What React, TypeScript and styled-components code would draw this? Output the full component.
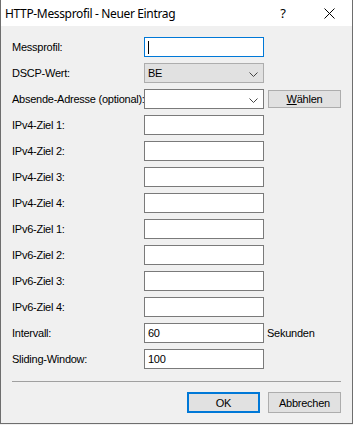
import React from 'react';
import styled, { createGlobalStyle } from 'styled-components';

const GlobalStyle = createGlobalStyle`
  html, body {
    margin: 0;
    padding: 0;
    background: #f0f0f0;
  }
`;

const Window = styled.div`
  box-sizing: border-box;
  width: 353px;
  height: 424px;
  background: #f0f0f0;
  border-left: 1px solid #6e6e6e;
  border-right: 1px solid #6e6e6e;
  border-bottom: 1px solid #6e6e6e;
  display: flex;
  flex-direction: column;
  font-family: 'Liberation Sans', Arial, sans-serif;
  font-size: 11px;
  letter-spacing: -0.25px;
  color: #000;
`;

const TitleBar = styled.div`
  height: 26px;
  background: #fff;
  display: flex;
  align-items: center;
  padding-left: 4px;
`;

const Title = styled.span`
  flex: 1;
  font-family: 'Noto Sans', 'Open Sans', sans-serif;
  font-size: 12px;
  letter-spacing: -0.35px;
  color: #000;
`;

const TitleButton = styled.div`
  width: 46px;
  height: 26px;
  display: flex;
  align-items: center;
  justify-content: center;
  font-family: 'Noto Sans', sans-serif;
  font-size: 13px;
`;

const FormGrid = styled.div`
  display: grid;
  grid-template-columns: 132px 120px auto;
  grid-auto-rows: 20px;
  row-gap: 6px;
  align-items: center;
  padding: 11px 0 0 11px;
`;

const Label = styled.label`
  white-space: nowrap;
`;

const Field = styled.div<{ $focused?: boolean; $filled?: boolean }>`
  box-sizing: border-box;
  position: relative;
  height: 20px;
  border: 1px solid ${p => (p.$focused ? '#0078d7' : p.$filled ? '#adadad' : '#7a7a7a')};
  background: ${p => (p.$filled ? '#e1e1e1' : '#fff')};
  display: flex;
  align-items: center;
  padding-left: 3px;
`;

const Caret = styled.span`
  width: 1px;
  height: 13px;
  background: #000;
`;

const Chevron = styled.svg`
  position: absolute;
  right: 5px;
  top: 8px;
`;

const Button = styled.button<{ $default?: boolean }>`
  box-sizing: border-box;
  width: 73px;
  height: 21px;
  background: #e1e1e1;
  border: ${p => (p.$default ? '2px solid #0078d7' : '1px solid #adadad')};
  font-family: 'Liberation Sans', Arial, sans-serif;
  font-size: 11px;
  letter-spacing: -0.25px;
  color: #000;
  padding: 0;
`;

const SideButton = styled(Button)`
  height: 18px;
  margin-left: 4px;
`;

const Unit = styled.span`
  margin-left: 3px;
`;

const Separator = styled.div`
  margin: 12px 11px 0 11px;
  height: 1px;
  background: #a0a0a0;
`;

const Footer = styled.div`
  display: flex;
  justify-content: flex-end;
  gap: 8px;
  padding: 10px 11px 0 0;
`;

const ChevronIcon = () => (
  <Chevron width="9" height="5" viewBox="0 0 9 5">
    <polyline points="0.5,0.5 4.5,4.5 8.5,0.5" fill="none" stroke="#444" strokeWidth="1" />
  </Chevron>
);

const targets = ['IPv4-Ziel 1:', 'IPv4-Ziel 2:', 'IPv4-Ziel 3:', 'IPv4-Ziel 4:', 'IPv6-Ziel 1:', 'IPv6-Ziel 2:', 'IPv6-Ziel 3:', 'IPv6-Ziel 4:'];

export default function App() {
  return (
    <>
      <GlobalStyle />
      <Window>
        <TitleBar>
          <Title>HTTP-Messprofil - Neuer Eintrag</Title>
          <TitleButton>?</TitleButton>
          <TitleButton>
            <svg width="11" height="11" viewBox="0 0 11 11">
              <path d="M0.5 0.5 L10.5 10.5 M10.5 0.5 L0.5 10.5" stroke="#000" strokeWidth="1" />
            </svg>
          </TitleButton>
        </TitleBar>

        <FormGrid>
          <Label>Messprofil:</Label>
          <Field $focused><Caret /></Field>
          <span />

          <Label>DSCP-Wert:</Label>
          <Field $filled>BE<ChevronIcon /></Field>
          <span />

          <Label>Absende-Adresse (optional):</Label>
          <Field><ChevronIcon /></Field>
          <SideButton><u>W</u>ählen</SideButton>

          {targets.map(t => (
            <React.Fragment key={t}>
              <Label>{t}</Label>
              <Field />
              <span />
            </React.Fragment>
          ))}

          <Label>Intervall:</Label>
          <Field>60</Field>
          <Unit>Sekunden</Unit>

          <Label>Sliding-Window:</Label>
          <Field>100</Field>
          <span />
        </FormGrid>

        <Separator />

        <Footer>
          <Button $default>OK</Button>
          <Button>Abbrechen</Button>
        </Footer>
      </Window>
    </>
  );
}
